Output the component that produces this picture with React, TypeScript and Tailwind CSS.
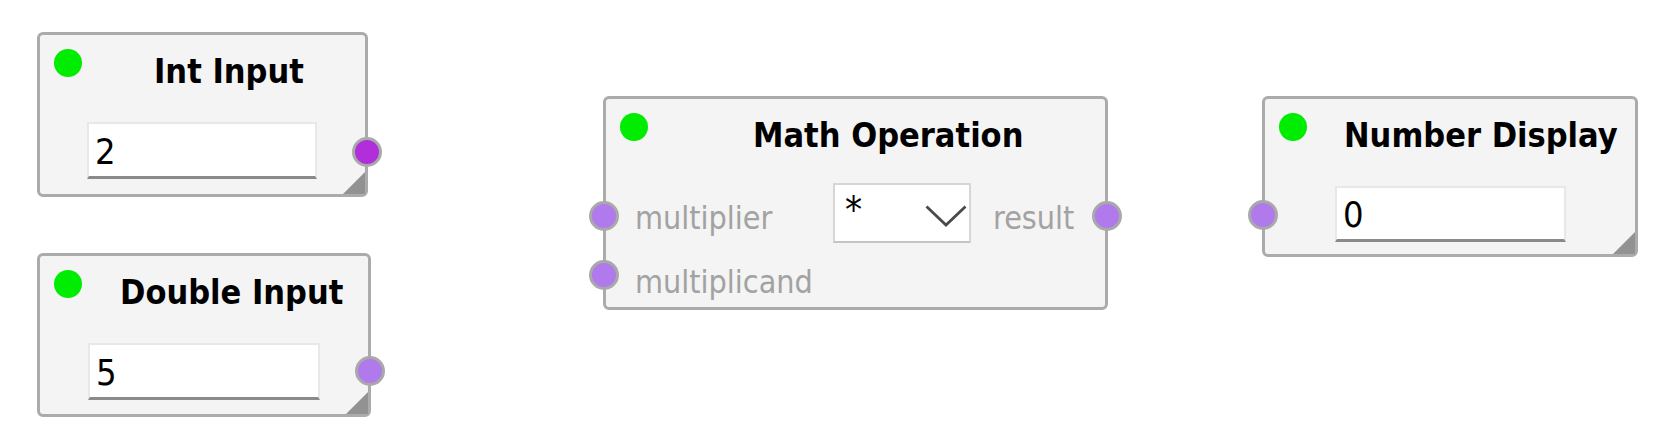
import type { ReactNode } from "react";

type PortSpec = {
  side: "left" | "right";
  top: string;
  color?: string;
};

type NodeProps = {
  box: string;
  title: string;
  titleGap: string;
  headerH?: string;
  ports: PortSpec[];
  corner?: boolean;
  children: ReactNode;
};

function Port({ side, top, color = "bg-[#b07aec]" }: PortSpec) {
  const sideClass = side === "left" ? "left-[-17px]" : "right-[-17px]";
  return (
    <span
      className={`absolute ${sideClass} ${top} h-[30px] w-[30px] rounded-full border-[3px] border-[#a9a9a9] ${color}`}
    />
  );
}

function GraphNode({ box, title, titleGap, headerH = "h-[87px]", ports, corner = true, children }: NodeProps) {
  return (
    <div
      className={`absolute ${box} rounded-[6px] border-[3px] border-[#ababab] bg-[#f4f4f4]`}
    >
      <div className={`flex items-start pl-[14px] pt-[14px] ${headerH}`}>
        <span className="h-[28px] w-[28px] shrink-0 rounded-full bg-[#00ec00]" />
        <span
          className={`${titleGap} mt-[5px] whitespace-nowrap text-[34px] font-bold leading-none text-black`}
        >
          {title}
        </span>
      </div>
      {children}
      {ports.map((p, i) => (
        <Port key={i} {...p} />
      ))}
      {corner ? (
        <span className="absolute bottom-0 right-0 h-0 w-0 border-b-[22px] border-l-[22px] border-b-[#929292] border-l-transparent" />
      ) : null}
    </div>
  );
}

function ValueBox({ value, className }: { value: string; className: string }) {
  return (
    <div
      className={`${className} flex items-center border-2 border-b-[3px] border-[#e8e8e8] border-b-[#8a8a8a] bg-white pl-[6px] text-black`}
    >
      <span className="mt-[3px] text-[36px] leading-none">{value}</span>
    </div>
  );
}

function Chevron() {
  return (
    <svg width="42" height="22" viewBox="0 0 42 22" className="shrink-0">
      <polyline
        points="1.5,1.5 21,20 40.5,1.5"
        fill="none"
        stroke="#4a4a4a"
        strokeWidth="2.8"
      />
    </svg>
  );
}

export default function App() {
  return (
    <div className="relative h-[438px] w-[1670px] overflow-hidden bg-white font-['DejaVu_Sans_Condensed','Liberation_Sans',sans-serif]">
      <GraphNode
        box="left-[37px] top-[32px] h-[165px] w-[331px]"
        title="Int Input"
        titleGap="ml-[72px]"
        ports={[{ side: "right", top: "top-[102px]", color: "bg-[#b12fda]" }]}
      >
        <ValueBox value="2" className="ml-[47px] h-[57px] w-[230px]" />
      </GraphNode>

      <GraphNode
        box="left-[37px] top-[253px] h-[164px] w-[334px]"
        title="Double Input"
        titleGap="ml-[38px]"
        ports={[{ side: "right", top: "top-[100px]" }]}
      >
        <ValueBox value="5" className="ml-[48px] h-[57px] w-[232px]" />
      </GraphNode>

      <GraphNode
        box="left-[603px] top-[96px] h-[214px] w-[505px]"
        title="Math Operation"
        titleGap="ml-[105px]"
        headerH="h-[84px]"
        corner={false}
        ports={[
          { side: "left", top: "top-[102px]" },
          { side: "left", top: "top-[161px]" },
          { side: "right", top: "top-[102px]" },
        ]}
      >
        <div className="flex items-center pl-[29px] text-[32px] text-[#a2a2a2]">
          <span className="mt-[10px] w-[198px]">multiplier</span>
          <div className="flex h-[60px] w-[138px] items-center justify-between border-2 border-[#d6d6d6] border-b-[#c4c4c4] bg-white pl-[10px] pr-[2px]">
            <span className="mt-[-6px] text-[38px] leading-none text-black">*</span>
            <span className="mt-[6px] flex">
              <Chevron />
            </span>
          </div>
          <span className="ml-[22px] mt-[10px]">result</span>
        </div>
        <div className="mt-[15px] pl-[29px] text-[32px] text-[#a2a2a2]">multiplicand</div>
      </GraphNode>

      <GraphNode
        box="left-[1262px] top-[96px] h-[161px] w-[376px]"
        title="Number Display"
        titleGap="ml-[37px]"
        ports={[{ side: "left", top: "top-[101px]" }]}
      >
        <ValueBox value="0" className="ml-[70px] h-[56px] w-[231px]" />
      </GraphNode>
    </div>
  );
}
